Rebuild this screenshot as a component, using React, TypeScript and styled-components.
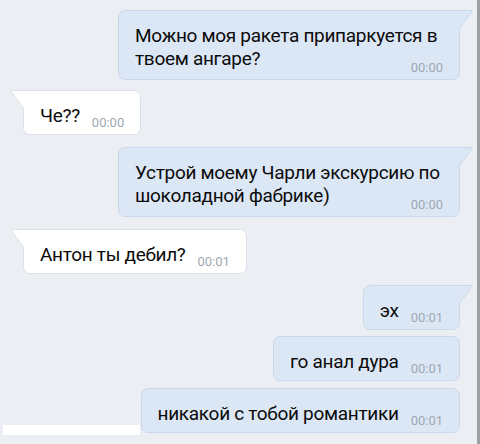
import styled, { createGlobalStyle } from 'styled-components';

type Message = {
	id: number;
	text: string;
	time: string;
	out: boolean;
	tail: boolean;
	gap: number;
};

const messages: Message[] = [
	{ id: 1, text: 'Можно моя ракета припаркуется в твоем ангаре?', time: '00:00', out: true, tail: true, gap: 0 },
	{ id: 2, text: 'Че??', time: '00:00', out: false, tail: true, gap: 10 },
	{ id: 3, text: 'Устрой моему Чарли экскурсию по шоколадной фабрике)', time: '00:00', out: true, tail: true, gap: 12 },
	{ id: 4, text: 'Антон ты дебил?', time: '00:01', out: false, tail: true, gap: 12 },
	{ id: 5, text: 'эх', time: '00:01', out: true, tail: true, gap: 11 },
	{ id: 6, text: 'го анал дура', time: '00:01', out: true, tail: false, gap: 6 },
	{ id: 7, text: 'никакой с тобой романтики', time: '00:01', out: true, tail: false, gap: 7 },
];

const OUT_BG = '#dce7f6';
const OUT_BORDER = '#cad8eb';
const IN_BG = '#ffffff';
const IN_BORDER = '#dde2e9';

export default function App() {
	return (
		<>
			<GlobalStyle />
			<Chat>
				{messages.map((m) => (
					<Bubble key={m.id} $out={m.out} $tail={m.tail} $gap={m.gap}>
						{m.tail && (
							<Tail $out={m.out} width="15" height="19" viewBox="0 0 15 19">
								<path
									d={m.out ? 'M0 0.5H14.5L1.5 18.5' : 'M15 0.5H0.5L13.5 18.5'}
									fill={m.out ? OUT_BG : IN_BG}
									stroke={m.out ? OUT_BORDER : IN_BORDER}
									strokeWidth="1"
								/>
							</Tail>
						)}
						<MessageText>{m.text}</MessageText>
						<Time>{m.time}</Time>
					</Bubble>
				))}
				<Redaction />
			</Chat>
		</>
	);
}

const GlobalStyle = createGlobalStyle`
	html, body {
		margin: 0;
		padding: 0;
		background: #ebeef3;
	}
`;

const Chat = styled.div`
	position: relative;
	display: flex;
	flex-direction: column;
	box-sizing: border-box;
	width: 480px;
	height: 444px;
	padding: 10px 17px 0 23px;
	background: #ebeef3;
	border-right: 3px solid #9d9fa2;
	overflow: hidden;
	font-family: Roboto, 'Liberation Sans', sans-serif;
`;

const Bubble = styled.div<{ $out: boolean; $tail: boolean; $gap: number }>`
	position: relative;
	align-self: ${(p) => (p.$out ? 'flex-end' : 'flex-start')};
	box-sizing: border-box;
	max-width: 342px;
	margin-top: ${(p) => p.$gap}px;
	display: flex;
	flex-wrap: wrap;
	align-items: flex-end;
	column-gap: 12px;
	padding: 13px 16px 7px 16px;
	background: ${(p) => (p.$out ? OUT_BG : IN_BG)};
	border: 1px solid ${(p) => (p.$out ? OUT_BORDER : IN_BORDER)};
	border-radius: 7px;
	${(p) => p.$tail && (p.$out ? 'border-top-right-radius: 0;' : 'border-top-left-radius: 0;')}
`;

const Tail = styled.svg<{ $out: boolean }>`
	position: absolute;
	top: -1px;
	${(p) => (p.$out ? 'right: -14px;' : 'left: -14px;')}
	display: block;
`;

const MessageText = styled.div`
	font-size: 19px;
	line-height: 23px;
	letter-spacing: -0.3px;
	color: #0b0b0b;
`;

const Time = styled.span`
	margin: -8px 0 -2px auto;
	font-size: 13px;
	line-height: 12px;
	color: #a0a8b2;
	white-space: nowrap;
`;

const Redaction = styled.div`
	position: absolute;
	left: 3px;
	top: 425px;
	width: 137px;
	height: 10px;
	background: #ffffff;
`;
